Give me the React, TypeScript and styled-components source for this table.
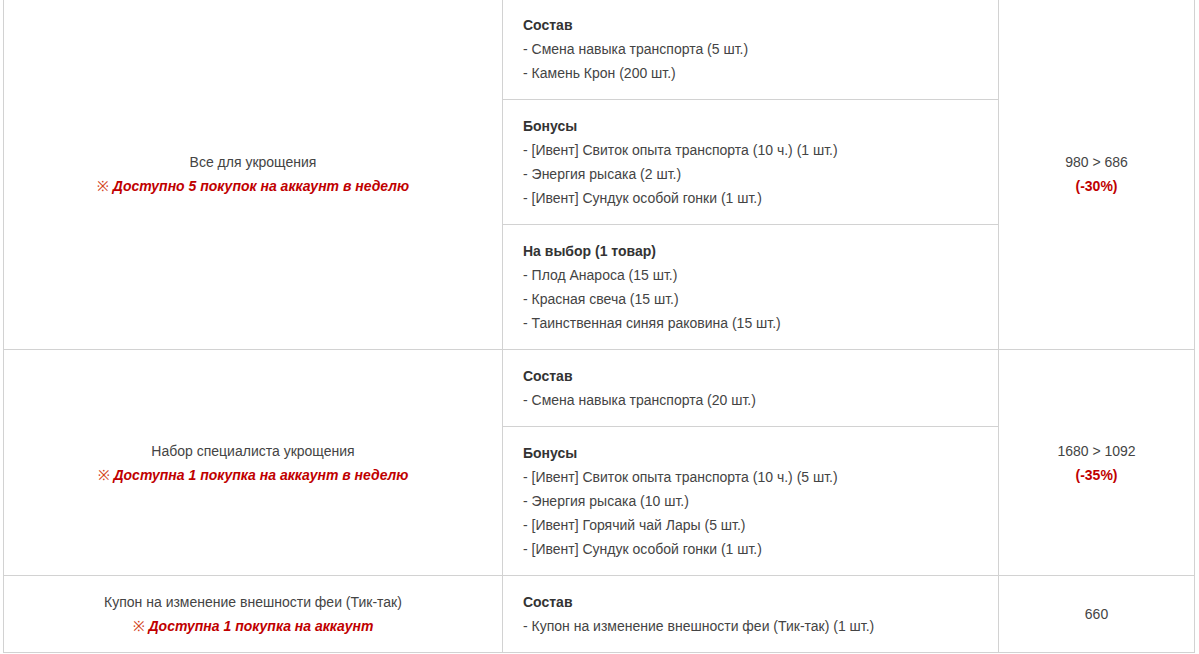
import React from "react";
import styled, { createGlobalStyle } from "styled-components";

const Global = createGlobalStyle`
  html, body { margin: 0; padding: 0; background: #fff; }
  body { font-family: "Liberation Sans", Arial, sans-serif; font-size: 14px; color: #444; }
`;

const Wrap = styled.div`
  padding-left: 3px;
  margin-top: -2px;
`;

const Table = styled.table`
  width: 1191px;
  border-collapse: collapse;
  table-layout: fixed;
  font-size: 14px;
  line-height: 24px;
  color: #444;
`;

const Td = styled.td`
  border: 1px solid #d2d2d2;
  padding: 14px 20px;
  vertical-align: middle;
`;

const NameCell = styled(Td)`
  text-align: center;
  padding: 0 10px;
`;

const PriceCell = styled(Td)`
  text-align: center;
  padding: 0 10px;
`;

const Line = styled.div``;

const Title = styled.div`
  font-weight: bold;
  color: #333;
`;

const Limit = styled.div`
  color: #c00000;
  font-weight: bold;
  font-style: italic;
`;

const Mark = styled.span`
  font-style: normal;
  font-weight: normal;
  color: #d2401a;
`;

const Discount = styled.div`
  color: #c00000;
  font-weight: bold;
`;

type Section = { title: string; items: string[] };
type Row = { name: string; limit: string; sections: Section[]; price: string; discount?: string };

const rows: Row[] = [
  {
    name: "Все для укрощения",
    limit: "Доступно 5 покупок на аккаунт в неделю",
    price: "980 > 686",
    discount: "(-30%)",
    sections: [
      { title: "Состав", items: ["Смена навыка транспорта (5 шт.)", "Камень Крон (200 шт.)"] },
      {
        title: "Бонусы",
        items: [
          "[Ивент] Свиток опыта транспорта (10 ч.) (1 шт.)",
          "Энергия рысака (2 шт.)",
          "[Ивент] Сундук особой гонки (1 шт.)",
        ],
      },
      {
        title: "На выбор (1 товар)",
        items: ["Плод Анароса (15 шт.)", "Красная свеча (15 шт.)", "Таинственная синяя раковина (15 шт.)"],
      },
    ],
  },
  {
    name: "Набор специалиста укрощения",
    limit: "Доступна 1 покупка на аккаунт в неделю",
    price: "1680 > 1092",
    discount: "(-35%)",
    sections: [
      { title: "Состав", items: ["Смена навыка транспорта (20 шт.)"] },
      {
        title: "Бонусы",
        items: [
          "[Ивент] Свиток опыта транспорта (10 ч.) (5 шт.)",
          "Энергия рысака (10 шт.)",
          "[Ивент] Горячий чай Лары (5 шт.)",
          "[Ивент] Сундук особой гонки (1 шт.)",
        ],
      },
    ],
  },
  {
    name: "Купон на изменение внешности феи (Тик-так)",
    limit: "Доступна 1 покупка на аккаунт",
    price: "660",
    sections: [{ title: "Состав", items: ["Купон на изменение внешности феи (Тик-так) (1 шт.)"] }],
  },
];

export default function App() {
  return (
    <>
      <Global />
      <Wrap>
        <Table>
          <colgroup>
            <col style={{ width: 499 }} />
            <col style={{ width: 496 }} />
            <col style={{ width: 196 }} />
          </colgroup>
          <tbody>
            {rows.map((r) =>
              r.sections.map((s, i) => (
                <tr key={r.name + i}>
                  {i === 0 && (
                    <NameCell rowSpan={r.sections.length}>
                      <Line>{r.name}</Line>
                      <Limit>
                        <Mark>※</Mark> {r.limit}
                      </Limit>
                    </NameCell>
                  )}
                  <Td>
                    <Title>{s.title}</Title>
                    {s.items.map((it) => (
                      <Line key={it}>- {it}</Line>
                    ))}
                  </Td>
                  {i === 0 && (
                    <PriceCell rowSpan={r.sections.length}>
                      <Line>{r.price}</Line>
                      {r.discount && <Discount>{r.discount}</Discount>}
                    </PriceCell>
                  )}
                </tr>
              ))
            )}
          </tbody>
        </Table>
      </Wrap>
    </>
  );
}
